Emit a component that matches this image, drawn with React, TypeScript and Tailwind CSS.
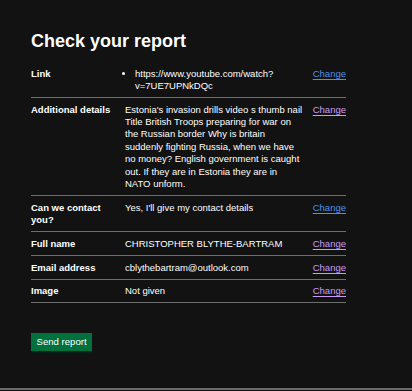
type Row = {
  label: string;
  value: React.ReactNode;
  visited?: boolean;
};

const rows: Row[] = [
  {
    label: "Link",
    value: (
      <div className="flex">
        <span className="-ml-[3px] mr-[10px] mt-[4.5px] h-[3px] w-[3px] shrink-0 rounded-full bg-white" />
        <span>
          https://www.youtube.com/watch?
          <wbr />
          v=7UE7UPNkDQc
        </span>
      </div>
    ),
  },
  {
    label: "Additional details",
    value:
      "Estonia's invasion drills video s thumb nail Title British Troops preparing for war on the Russian border Why is britain suddenly fighting Russia, when we have no money? English government is caught out. If they are in Estonia they are in NATO unform.",
    visited: true,
  },
  { label: "Can we contact you?", value: "Yes, I'll give my contact details" },
  { label: "Full name", value: "CHRISTOPHER BLYTHE-BARTRAM", visited: true },
  { label: "Email address", value: "cblythebartram@outlook.com", visited: true },
  { label: "Image", value: "Not given", visited: true },
];

function SummaryRow({ row }: { row: Row }) {
  return (
    <div className="flex border-b border-[#6e6e6e] pb-[4.8px] pt-[5.5px]">
      <dt className="w-[94px] shrink-0 pr-[10px] font-bold">{row.label}</dt>
      <dd className="w-[180px] shrink-0">{row.value}</dd>
      <dd className="flex-1 text-right">
        <a
          href="#"
          className={`underline underline-offset-[1.5px] ${
            row.visited ? "text-[#c89cf5]" : "text-[#4f8fe6]"
          }`}
        >
          Change
        </a>
      </dd>
    </div>
  );
}

export default function App() {
  return (
    <div className="flex min-h-[391px] flex-col bg-[#121212] font-['Liberation_Sans',Arial,sans-serif] text-white">
      <main className="flex-1 px-[31px] pt-[31px]">
        <h1 className="mb-[11px] text-[18px] font-bold leading-[20px]">Check your report</h1>
        <dl className="w-[315px] text-[9.5px] leading-[12.4px]">
          {rows.map((row) => (
            <SummaryRow key={row.label} row={row} />
          ))}
        </dl>
        <button className="mt-[30px] h-[18px] bg-[#00703c] px-[5.5px] text-[9.6px] leading-[12px] text-white shadow-[0_1.5px_0_#002d18]">
          Send report
        </button>
      </main>
      <footer className="h-[3px] border-t-2 border-[#6b6b6b]" />
    </div>
  );
}
